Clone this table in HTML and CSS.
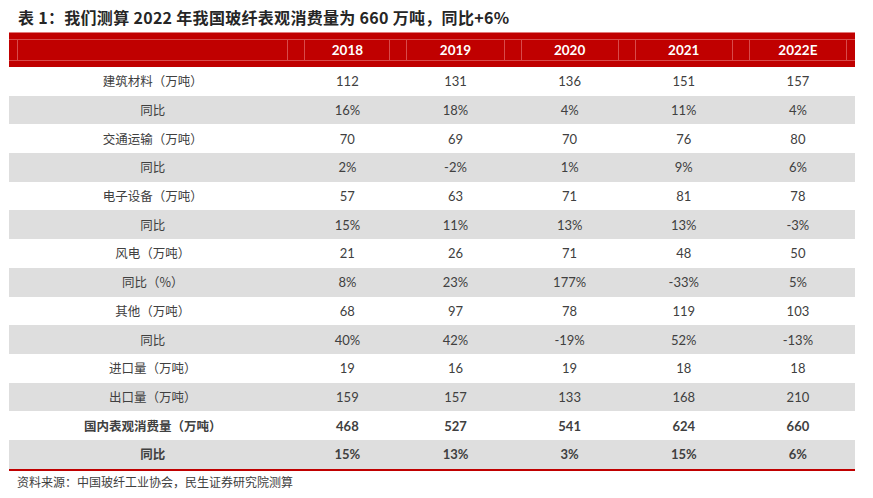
FILE: index.html
```html
<!DOCTYPE html>
<html lang="zh">
<head>
<meta charset="utf-8">
<link rel="stylesheet" href="styles.css">
</head>
<body>
<div class="page">
  <div class="title">表 1：我们测算 2022 年我国玻纤表观消费量为 660 万吨，同比+6%</div>
  <table class="data">
    <colgroup>
      <col class="c-label"><col class="c-first"><col class="c-year"><col class="c-year"><col class="c-year"><col class="c-year">
    </colgroup>
    <thead>
      <tr><th></th><th>2018</th><th>2019</th><th>2020</th><th>2021</th><th>2022E</th></tr>
    </thead>
    <tbody>
      <tr><td>建筑材料（万吨）</td><td>112</td><td>131</td><td>136</td><td>151</td><td>157</td></tr>
      <tr class="alt"><td>同比</td><td>16%</td><td>18%</td><td>4%</td><td>11%</td><td>4%</td></tr>
      <tr><td>交通运输（万吨）</td><td>70</td><td>69</td><td>70</td><td>76</td><td>80</td></tr>
      <tr class="alt"><td>同比</td><td>2%</td><td>-2%</td><td>1%</td><td>9%</td><td>6%</td></tr>
      <tr><td>电子设备（万吨）</td><td>57</td><td>63</td><td>71</td><td>81</td><td>78</td></tr>
      <tr class="alt"><td>同比</td><td>15%</td><td>11%</td><td>13%</td><td>13%</td><td>-3%</td></tr>
      <tr><td>风电（万吨）</td><td>21</td><td>26</td><td>71</td><td>48</td><td>50</td></tr>
      <tr class="alt"><td>同比（%）</td><td>8%</td><td>23%</td><td>177%</td><td>-33%</td><td>5%</td></tr>
      <tr><td>其他（万吨）</td><td>68</td><td>97</td><td>78</td><td>119</td><td>103</td></tr>
      <tr class="alt"><td>同比</td><td>40%</td><td>42%</td><td>-19%</td><td>52%</td><td>-13%</td></tr>
      <tr><td>进口量（万吨）</td><td>19</td><td>16</td><td>19</td><td>18</td><td>18</td></tr>
      <tr class="alt"><td>出口量（万吨）</td><td>159</td><td>157</td><td>133</td><td>168</td><td>210</td></tr>
      <tr class="bold"><td>国内表观消费量（万吨）</td><td>468</td><td>527</td><td>541</td><td>624</td><td>660</td></tr>
      <tr class="alt bold last"><td>同比</td><td>15%</td><td>13%</td><td>3%</td><td>15%</td><td>6%</td></tr>
    </tbody>
  </table>
  <div class="source">资料来源：中国玻纤工业协会，民生证券研究院测算</div>
</div>
</body>
</html>
```

FILE: styles.css
```css
html, body {
  margin: 0;
  padding: 0;
  background: #ffffff;
}

.page {
  padding: 7px 0 0 9px;
  font-family: "Lato", "Noto Sans CJK SC", sans-serif;
  color: #404040;
  text-spacing-trim: space-all;
}

.title {
  font-family: "Noto Sans CJK SC", sans-serif;
  font-weight: 700;
  font-size: 16px;
  letter-spacing: 0.3px;
  line-height: 21px;
  height: 25px;
  padding-left: 9px;
  color: #262626;
}

.data {
  border-collapse: collapse;
  table-layout: fixed;
  width: 846px;
  font-size: 13px;
}

.c-label { width: 287px; }
.c-first { width: 102px; }
.c-year { width: 114px; }

.data th {
  height: 34px;
  padding: 0;
  color: #ffffff;
  font-family: "Lato", "Noto Sans", sans-serif;
  font-weight: 700;
  font-size: 13.5px;
  text-align: center;
  border-top: 1px solid #e27a7a;
  background:
    linear-gradient(#d84a4a, #d84a4a) 0 6px / 100% 1px no-repeat,
    linear-gradient(#d84a4a, #d84a4a) 0 calc(100% - 6px) / 100% 1px no-repeat,
    linear-gradient(#d84a4a, #d84a4a) 8px 6px / 1px calc(100% - 12px) no-repeat,
    linear-gradient(#d84a4a, #d84a4a) calc(100% - 8px) 6px / 1px calc(100% - 12px) no-repeat,
    #c00000;
}

.data td {
  height: 28.7px;
  padding: 0;
  text-align: center;
  vertical-align: middle;
  line-height: 16px;
}

.data td:first-child {
  font-family: "Noto Sans CJK SC", sans-serif;
  font-size: 12.5px;
}

.data tr.alt td {
  background: #dedede;
}

.data tr.bold td {
  font-weight: 700;
}

.data tr.last td {
  border-bottom: 2px solid #c00000;
}

.source {
  font-family: "Noto Sans CJK SC", sans-serif;
  font-size: 12px;
  line-height: 16px;
  padding: 3px 0 0 8px;
  color: #404040;
}
```
